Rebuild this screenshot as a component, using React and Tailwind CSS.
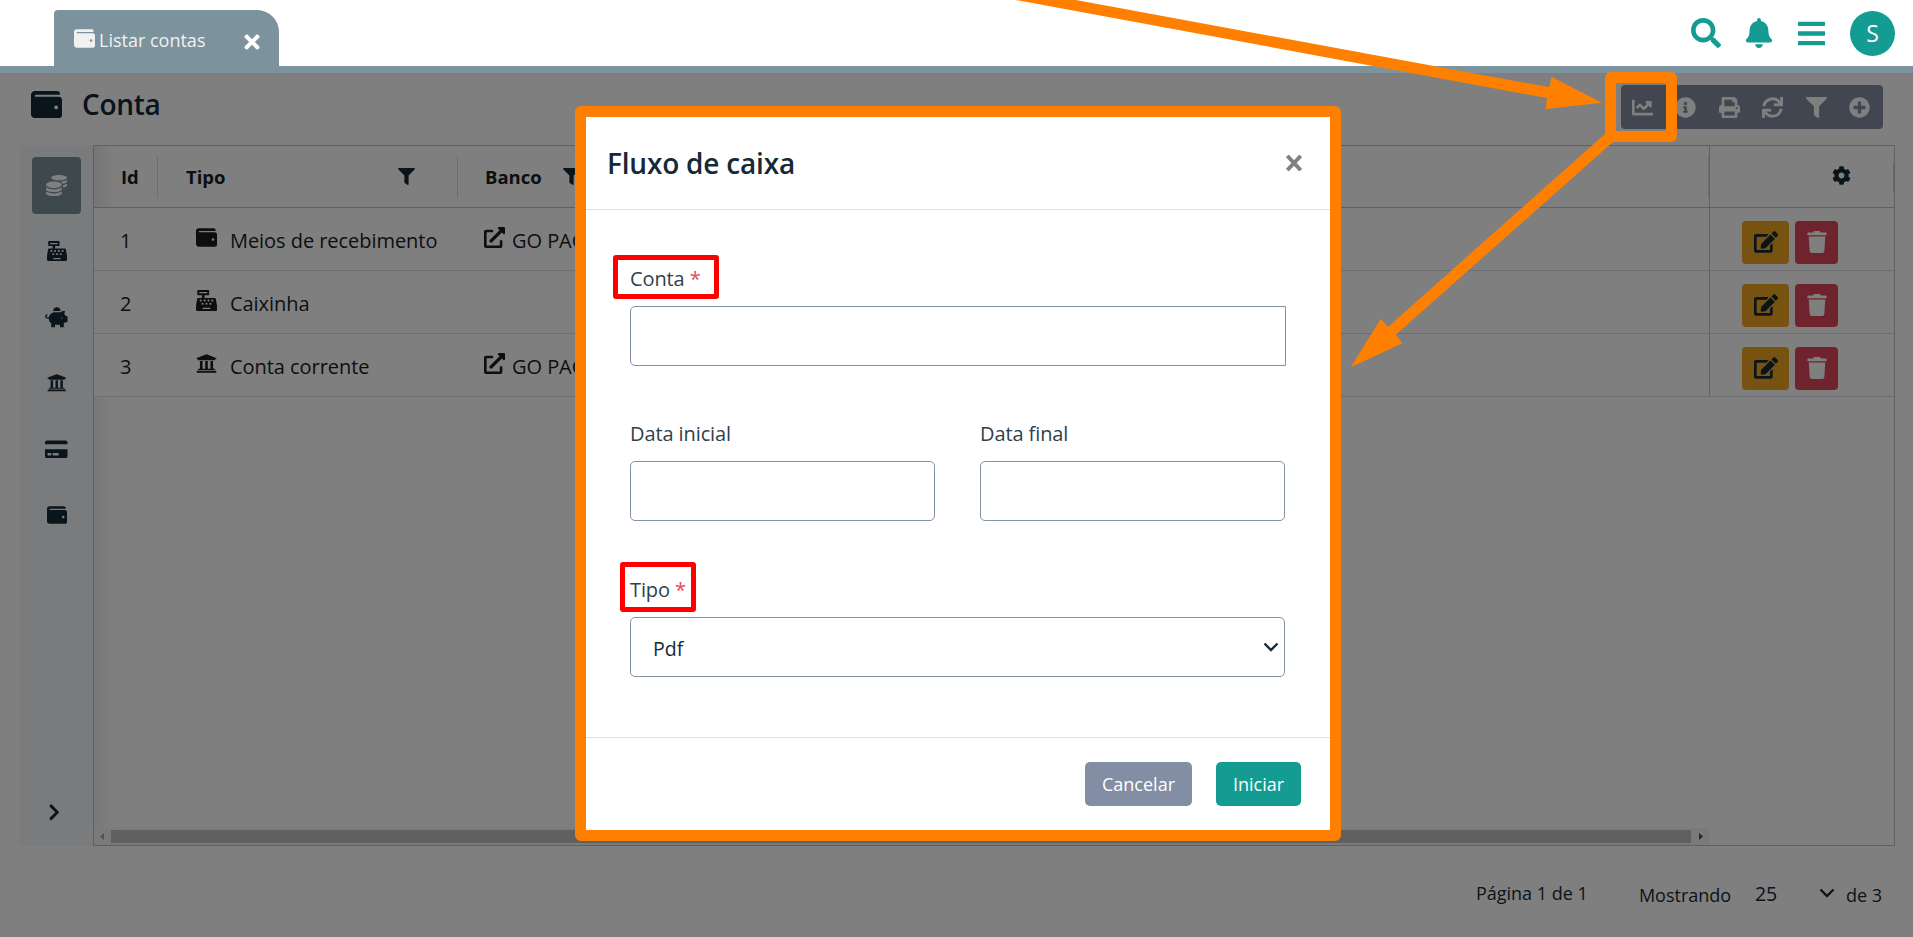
import {
  FaWallet, FaCashRegister, FaPiggyBank, FaUniversity, FaCreditCard, FaCoins, FaChartLine,
  FaInfoCircle, FaPrint, FaSync, FaFilter, FaPlusCircle, FaCog, FaEdit, FaTrash,
  FaExternalLinkAlt, FaSearch, FaBell, FaBars, FaTimes, FaChevronRight,
} from "react-icons/fa";

function ChevronDown({ className }) {
  return (
    <svg viewBox="0 0 16 10" width="16" height="10" className={className} fill="none" stroke="currentColor" strokeWidth="2.4">
      <path d="M1.5 1.5 8 8l6.500-6.500" />
    </svg>
  );
}

function TopBar() {
  return (
    <header className="flex h-[73px] items-end justify-between border-b-[7px] border-[#7c929d] bg-white pl-[54px] pr-[18px]">
      <div className="flex h-14 w-[225px] items-center rounded-tl-[4px] rounded-tr-[22px] bg-[#7c929d] pb-[3px] pl-5 text-[#f1f1f1]">
        <FaWallet size={21} className="mt-1" />
        <span className="ml-1 mt-[7px] w-[142px] text-[18px] leading-6">Listar contas</span>
        <FaTimes size={22} className="mt-2.5 text-white" />
      </div>
      <div className="flex h-full items-center text-[#149c92]">
        <FaSearch size={30} />
        <FaBell size={30} className="ml-[23px]" />
        <FaBars size={31} className="ml-[22px]" />
        <div className="ml-[23px] flex size-[45px] items-center justify-center rounded-full bg-[#149c92] text-[23px] text-white">
          S
        </div>
      </div>
    </header>
  );
}

const tools = [FaChartLine, FaInfoCircle, FaPrint, FaSync, FaFilter, FaPlusCircle];

function TitleBar() {
  return (
    <div className="flex h-[72px] items-start justify-between pl-[31px] pr-[30px] pt-3">
      <div className="flex items-center pt-[3px] text-[#152936]">
        <FaWallet size={31} />
        <h1 className="ml-5 text-[28px] font-semibold leading-8 tracking-[-0.3px]">Conta</h1>
      </div>
      <div className="flex h-11 items-center rounded-[4px] bg-[#828da1] pr-[1.500px] text-white">
        {tools.map((Icon, i) => (
          <span key={i} className="flex w-[43.500px] justify-center">
            <Icon size={21} />
          </span>
        ))}
      </div>
    </div>
  );
}

const nav = [
  { Icon: FaCashRegister, size: 20 },
  { Icon: FaPiggyBank, size: 22.5 },
  { Icon: FaUniversity, size: 19.5 },
  { Icon: FaCreditCard, size: 22.5 },
  { Icon: FaWallet, size: 20 },
];

function Sidebar() {
  return (
    <nav className="flex w-[73px] flex-col items-center bg-[#f3f6fa] pt-3 text-[#152936]">
      <div className="flex h-[57px] w-[49px] items-center justify-center rounded-[4px] bg-[#7c929d] text-white">
        <FaCoins size={21} />
      </div>
      <div className="flex flex-col pt-1">
        {nav.map(({ Icon, size }, i) => (
          <span key={i} className="flex h-[66px] w-12 items-center justify-center">
            <Icon size={size} />
          </span>
        ))}
      </div>
      <FaChevronRight size={18.5} className="mb-[25px] mr-[4px] mt-auto" />
    </nav>
  );
}

const rows = [
  { id: 1, Icon: FaWallet, tipo: "Meios de recebimento", banco: "GO PAG" },
  { id: 2, Icon: FaCashRegister, tipo: "Caixinha" },
  { id: 3, Icon: FaUniversity, tipo: "Conta corrente", banco: "GO PAG" },
];

function Table() {
  return (
    <div className="flex w-[1802px] flex-col border border-[#bdc3c7] text-[#181d1f]">
      <div className="flex h-[62px] items-center border-b border-[#bdc3c7] bg-gradient-to-r from-[#ececec] via-white via-[1.2%] to-white text-[18.500px] font-bold">
        <span className="h-[42px] w-16 border-r border-[#dddddd] pl-[27px] leading-[42px]">Id</span>
        <div className="flex h-[42px] w-[300px] items-center justify-between border-r border-[#dddddd] pl-7 pr-[42px]">
          Tipo
          <FaFilter size={17} className="text-[#152936]" />
        </div>
        <div className="flex flex-1 items-center pl-[27px]">
          <span className="w-[78px]">Banco</span>
          <FaFilter size={17} className="text-[#152936]" />
        </div>
        <span className="h-[42px] w-px bg-[#dddddd]" />
        <div className="flex h-full w-[185px] items-center justify-end border-l border-[#bdc3c7]">
          <FaCog size={19} className="mb-[3px] text-[#152936]" />
          <span className="ml-[42px] h-[30px] w-px bg-[#cfd3da]" />
        </div>
      </div>
      {rows.map(({ id, Icon, tipo, banco }) => (
        <div key={id} className="flex h-[63px] items-center border-b border-[#d9dce6] text-[20px] tracking-[-0.05px]">
          <span className="w-[102px] pl-[26px] pt-[3px]">{id}</span>
          <Icon size={21} className="mb-1" />
          <span className="ml-[13px] w-[254px] pt-[3px]">{tipo}</span>
          <div className="flex flex-1 items-center">
            {banco && (
              <>
                <FaExternalLinkAlt size={21} className="mb-[3px]" />
                <span className="ml-[7px] pt-[3px]">{banco}</span>
              </>
            )}
          </div>
          <div className="flex h-full w-[185px] items-center gap-1.5 border-l border-[#bdc3c7] pl-8 pt-1.5">
            <span className="flex h-[43px] w-[47px] items-center justify-center rounded-[4px] bg-[#efa522] text-[#152936]">
              <FaEdit size={24} />
            </span>
            <span className="flex size-[43px] items-center justify-center rounded-[4px] bg-[#de4759] text-white">
              <FaTrash size={22} />
            </span>
          </div>
        </div>
      ))}
      <div className="flex-1 bg-gradient-to-r from-[#f0f0f0] via-white via-[1.2%] to-white" />
      <div className="flex h-[17px] w-[1615px] items-center bg-[#f5f5f5]">
        <svg width="17" height="17" viewBox="0 0 17 17"><path d="M10 5v7L6 8.500z" fill="#a3a3a3" /></svg>
        <span className="h-[13px] flex-1 bg-[#c1c1c1]" />
        <svg width="18" height="17" viewBox="0 0 18 17"><path d="M8 5v7l4-3.500z" fill="#505050" /></svg>
      </div>
    </div>
  );
}

function Footer() {
  return (
    <footer className="flex flex-1 items-start justify-end pr-[31px] text-[18px] leading-6 text-[#152936]">
      <span className="mt-[35px] w-[163px]">Página 1 de 1</span>
      <span className="mt-[37px] w-[116px]">Mostrando</span>
      <span className="mt-[36px] w-16 text-[19.500px]">25</span>
      <ChevronDown className="mt-[42px]" />
      <span className="ml-[11px] mt-[37px]">de 3</span>
    </footer>
  );
}

function Label({ children, required }) {
  return (
    <label className="block h-10 text-[20px] leading-8 tracking-[-0.1px] text-[#30414d]">
      {children}
      {required && <span className="ml-[5px] text-[#e4485d]">*</span>}
    </label>
  );
}

function Modal() {
  return (
    <section className="mt-[33px] flex h-[735px] w-[766px] flex-col rounded-[6px] border-[11px] border-[#ff8000] bg-white text-[#152936]">
      <div className="flex h-[93px] items-center justify-between border-b border-[#dee2e6] pl-[21px] pr-7">
        <h2 className="text-[28px] font-semibold tracking-[-0.2px]">Fluxo de caixa</h2>
        <svg width="16" height="16" viewBox="0 0 16 16" stroke="#808080" strokeWidth="3.8">
          <path d="M1.300 .8l13.400 14.400M14.700 .8l-13.400 14.400" />
        </svg>
      </div>
      <div className="flex flex-1 flex-col pl-11 pr-[45px] pt-[53px]">
        <div className="relative h-[155px]">
          <Label required>Conta</Label>
          <div className="-mr-px mt-[3px] h-[60px] rounded-l-[5px] border border-[#8490a5]" />
          <div className="absolute -left-[17px] -top-[8px] h-11 w-[106px] rounded-[3px] border-[5px] border-[#ff0000]" />
        </div>
        <div className="flex h-[156px] gap-[45px]">
          <div className="flex-1">
            <Label>Data inicial</Label>
            <div className="mt-[3px] h-[60px] rounded-[5px] border border-[#8490a5]" />
          </div>
          <div className="flex-1">
            <Label>Data final</Label>
            <div className="mt-[3px] h-[60px] rounded-[5px] border border-[#8490a5]" />
          </div>
        </div>
        <div className="relative">
          <Label required>Tipo</Label>
          <div className="mt-[3px] flex h-[60px] items-center justify-between rounded-[5px] border border-[#8490a5] pl-[22px] pr-[5px] text-[19.500px]">
            <span className="mt-[3px]">Pdf</span>
            <ChevronDown />
          </div>
          <div className="absolute -left-2.5 -top-[12px] h-[50px] w-[76px] rounded-[3px] border-[5px] border-[#ff0000]" />
        </div>
      </div>
      <div className="flex h-[93px] items-center justify-end gap-6 border-t border-[#dee2e6] pr-[29px] text-[18px] text-white">
        <button className="h-11 w-[107px] rounded-[5px] bg-[#838ea5]">Cancelar</button>
        <button className="h-11 w-[85px] rounded-[5px] bg-[#149c92]">Iniciar</button>
      </div>
    </section>
  );
}

function Annotations() {
  return (
    <>
      <div className="absolute left-[1605px] top-[72px] h-[70px] w-[72px] rounded-[6px] border-[11px] border-[#ff8000]" />
      <svg width="1913" height="937" viewBox="0 0 1913 937" fill="#ff8000" className="pointer-events-none absolute left-0 top-0">
        <path d="M1015.500 0H1076L1549.400 87.300 1551.400 76.700 1602 102.700 1545.700 109 1547 98z" />
        <path d="M1605 134 1388.300 326.700 1380.700 319 1350.700 367.300 1402.300 343.300 1395.700 334.700 1613 142z" />
      </svg>
    </>
  );
}

export default function App() {
  return (
    <div className="relative flex h-[937px] w-[1913px] flex-col overflow-hidden bg-white font-['Open_Sans','Noto_Sans',sans-serif]">
      <TopBar />
      <main className="relative flex flex-1 flex-col">
        <TitleBar />
        <div className="flex h-[701px] pl-5">
          <Sidebar />
          <Table />
        </div>
        <Footer />
        <div className="absolute inset-0 flex items-start bg-black/50 pl-[575px]">
          <Modal />
        </div>
      </main>
      <Annotations />
    </div>
  );
}
